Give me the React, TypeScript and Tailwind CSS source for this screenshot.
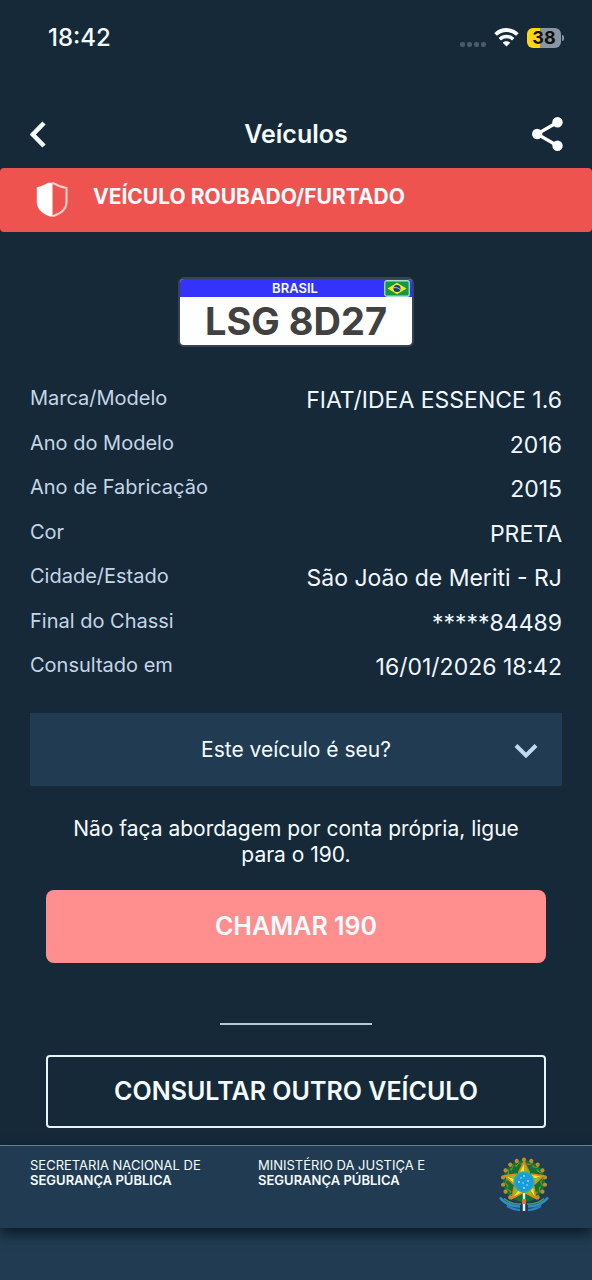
import React from "react";

const details = [
  { label: "Marca/Modelo", value: "FIAT/IDEA ESSENCE 1.6" },
  { label: "Ano do Modelo", value: "2016" },
  { label: "Ano de Fabricação", value: "2015" },
  { label: "Cor", value: "PRETA" },
  { label: "Cidade/Estado", value: "São João de Meriti - RJ" },
  { label: "Final do Chassi", value: "*****84489" },
  { label: "Consultado em", value: "16/01/2026 18:42" },
];

function WifiIcon() {
  return (
    <svg viewBox="0 0 25 20" className="h-5 w-[25px]" fill="none" aria-hidden="true">
      <path d="M1.600 6.500C7.600 .5 17.400 .5 23.400 6.500" stroke="white" strokeWidth="3.800" />
      <path d="M5.800 11.200c3.800-3.700 9.600-3.700 13.400 0" stroke="white" strokeWidth="3.400" />
      <path d="M12.500 18.600 8.700 14.700c2.100-1.900 5.500-1.900 7.600 0z" fill="white" />
    </svg>
  );
}

function ShareIcon() {
  return (
    <svg viewBox="0 0 32 36" className="h-9 w-8" fill="white" aria-hidden="true">
      <path d="M26 6 5 18l21 12" fill="none" stroke="white" strokeWidth="3.200" />
      <circle cx="25.500" cy="6.200" r="5.200" />
      <circle cx="5.200" cy="18" r="5.200" />
      <circle cx="25.500" cy="29.800" r="5.200" />
    </svg>
  );
}

function ShieldIcon() {
  return (
    <svg viewBox="0 0 32 36" className="h-9 w-8" aria-hidden="true">
      <path d="M16.500 .8H12C8.500 3.200 5 4.400 .8 5.200V20c0 7.500 6.200 12 13.200 14.500h2.500z" fill="white" />
      <path
        d="M16 1.600h2.500c3.500 2.400 7.500 3.600 12 4.300V20c0 7-6 11.500-12.500 13.700h-2"
        fill="none"
        stroke="#ffd2c9"
        strokeWidth="2"
      />
    </svg>
  );
}

function FlagIcon() {
  return (
    <svg viewBox="0 0 26 17" className="h-[17px] w-[26px]" aria-hidden="true">
      <rect x=".75" y=".75" width="24.500" height="15.500" rx="2" fill="#109a41" stroke="#a7dfcb" strokeWidth="1.300" />
      <path d="M13 2.800 22.500 8.500 13 14.200 3.500 8.500z" fill="#f4e425" />
      <circle cx="13" cy="8.500" r="3.500" fill="#173d78" />
      <path d="M9.700 7.700c2.600-.4 4.800.2 6.500 1.800" fill="none" stroke="#d9ecf2" strokeWidth=".8" />
    </svg>
  );
}

const leafAngles = [-140, -120, -100, -80, -60, -40, -20, 0, 20, 40, 60, 80, 100, 120, 140];
const starAngles = [0, 72, 144, 216, 288];

function CoatOfArms() {
  return (
    <svg viewBox="0 0 52 56" className="h-14 w-[52px]" role="img" aria-label="Brasão da República">
      <circle cx="26" cy="25" r="15.500" fill="none" stroke="#0d7434" strokeWidth="11" />
      {leafAngles.map((angle) => (
        <g key={angle} transform={`rotate(${angle} 26 25)`}>
          <circle cx="26" cy="3.700" r="2.100" fill="#b98f35" />
          <path d="m23.500 8.500 4.500-2.500" stroke="#a97a20" strokeWidth="1" />
          <circle cx="29.500" cy="8" r="1.200" fill="#2f9440" />
        </g>
      ))}
      {starAngles.map((angle) => (
        <g key={angle} transform={`rotate(${angle} 26 26)`}>
          <path d="M26 6V26l-5.500-9z" fill="#f6e32c" />
          <path d="M26 6V26l5.500-9z" fill="#8fbd2c" />
          <path d="m20.500 17L26 6l5.500 11" fill="none" stroke="#e8831c" strokeWidth="1.700" />
        </g>
      ))}
      <path d="M2 41.500c5 6.500 12 9 20 9M50 41.500c-5 6.500-12 9-20 9" fill="none" stroke="#2d8fc9" strokeWidth="2.600" />
      <path d="M9 49.500c4 3 8 4.300 13 4.500M43 49.500c-4 3-8 4.300-13 4.500" fill="none" stroke="#2b83bd" strokeWidth="2.400" />
      <path d="M6 42.500c5 4.500 11 6 17 5.500M46 42.500c-5 4.500-11 6-17 5.500" fill="none" stroke="#4aa05e" strokeWidth="1.500" />
      <path d="M26 37v18" stroke="#e8edf0" strokeWidth="2.400" />
      <path d="M26 43v5" stroke="#e5702a" strokeWidth="4" />
      <circle cx="26" cy="26" r="10" fill="#1b9bdc" stroke="#35ae9a" strokeWidth="1.400" />
      <g fill="#9ceaf5">
        <circle cx="26" cy="20" r=".9" />
        <circle cx="26" cy="32" r=".9" />
        <circle cx="21" cy="26" r=".9" />
        <circle cx="30" cy="25" r=".9" />
        <circle cx="23" cy="22" r=".8" />
        <circle cx="29" cy="29" r=".8" />
        <circle cx="25" cy="27" r=".8" />
      </g>
    </svg>
  );
}

function StatusBar() {
  return (
    <div className="flex h-[76px] items-center justify-between pr-7 pl-12">
      <span className="text-2xl font-medium">18:42</span>
      <div className="flex items-center gap-2">
        <div className="flex gap-0.5 pt-3">
          <i className="size-[5px] rounded-xs bg-[#4a5a69]" />
          <i className="size-[5px] rounded-xs bg-[#4a5a69]" />
          <i className="size-[5px] rounded-xs bg-[#4a5a69]" />
          <i className="size-[5px] rounded-xs bg-[#4a5a69]" />
        </div>
        <WifiIcon />
        <div className="flex items-center gap-px">
          <span className="flex h-5 w-[34px] items-center justify-center rounded-md bg-linear-to-r from-[#fdd714] from-38% to-[#8995a1] to-38% text-lg font-bold text-[#10100c]">
            38
          </span>
          <i className="h-1.5 w-0.5 rounded-r-full bg-[#8995a1]" />
        </div>
      </div>
    </div>
  );
}

export default function App() {
  return (
    <div className="flex min-h-screen flex-col bg-[#152939] font-['Inter','Liberation_Sans',sans-serif] text-[#f5fcff]">
      <StatusBar />

      <header className="mt-6 grid h-[68px] grid-cols-[1fr_auto_1fr] items-center px-7">
        <button type="button" aria-label="Voltar" className="justify-self-start">
          <svg viewBox="0 0 20 28" className="h-7 w-5" fill="none" aria-hidden="true">
            <path d="M16 3 4.800 14.500 16 26" stroke="#f5fcff" strokeWidth="4.600" />
          </svg>
        </button>
        <h1 className="pt-0.5 text-[25px] font-semibold">Veículos</h1>
        <button type="button" aria-label="Compartilhar" className="justify-self-end">
          <ShareIcon />
        </button>
      </header>

      <div role="alert" className="flex h-16 items-center gap-[25px] rounded-sm bg-[#ef5350] pl-9">
        <ShieldIcon />
        <strong className="pb-1.5 text-[21px] font-bold">VEÍCULO ROUBADO/FURTADO</strong>
      </div>

      <main className="flex flex-col px-[30px]">
        <div className="mt-[45px] w-[236px] self-center overflow-hidden rounded-md border-2 border-[#3a4150] bg-white">
          <div className="grid h-[18px] grid-cols-[1fr_auto_1fr] items-center bg-[#3333fb] pr-0.5">
            <span className="col-start-2 text-[13px] leading-4 font-semibold">BRASIL</span>
            <span className="justify-self-end">
              <FlagIcon />
            </span>
          </div>
          <p className="text-center text-[38px] leading-[48px] font-bold text-[#414142]">LSG 8D27</p>
        </div>

        <dl className="mt-[29px] grid min-h-[312px] auto-rows-fr">
          {details.map((item) => (
            <div key={item.label} className="flex items-start justify-between pt-2">
              <dt className="text-xl leading-7 text-[#c5d5e6]">{item.label}</dt>
              <dd className="text-[23px] leading-8 text-[#f0f7ff]">{item.value}</dd>
            </div>
          ))}
        </dl>

        <button type="button" className="mt-[25px] grid h-[73px] grid-cols-[1fr_auto_1fr] items-center bg-[#213c52] px-6">
          <span className="col-start-2 text-[21px]">Este veículo é seu?</span>
          <svg viewBox="0 0 24 18" className="h-[18px] w-6 justify-self-end" fill="none" aria-hidden="true">
            <path d="M2 4.500 12 14.500 22 4.500" stroke="#c5d8f2" strokeWidth="4" />
          </svg>
        </button>

        <p className="mt-[30px] px-10 text-center text-[21px] leading-[26px]">
          Não faça abordagem por conta própria, ligue para o 190.
        </p>

        <div className="mt-[22px] flex flex-col px-4">
          <button type="button" className="h-[73px] rounded-lg bg-[#ff8e8e] text-[25px] font-semibold">
            CHAMAR 190
          </button>
          <hr className="mt-15 w-[152px] self-center border-t-2 border-[#b7cbd7]" />
          <button type="button" className="mt-[30px] h-[73px] rounded-sm border-2 border-[#e8f4f9] text-[25px] font-semibold">
            CONSULTAR OUTRO VEÍCULO
          </button>
        </div>
      </main>

      <footer className="mt-[17px] flex grow flex-col bg-[#213c52]">
        <div className="flex h-[83px] items-start border-t border-[#67808f] pr-[42px] pl-[30px] text-[13px] leading-[15px] shadow-[0_6px_12px_#0b1a27]">
          <p className="w-[228px] pt-3">
            SECRETARIA NACIONAL DE
            <strong className="block font-semibold">SEGURANÇA PÚBLICA</strong>
          </p>
          <p className="grow pt-3">
            MINISTÉRIO DA JUSTIÇA E
            <strong className="block font-semibold">SEGURANÇA PÚBLICA</strong>
          </p>
          <span className="pt-2.5">
            <CoatOfArms />
          </span>
        </div>
      </footer>
    </div>
  );
}
